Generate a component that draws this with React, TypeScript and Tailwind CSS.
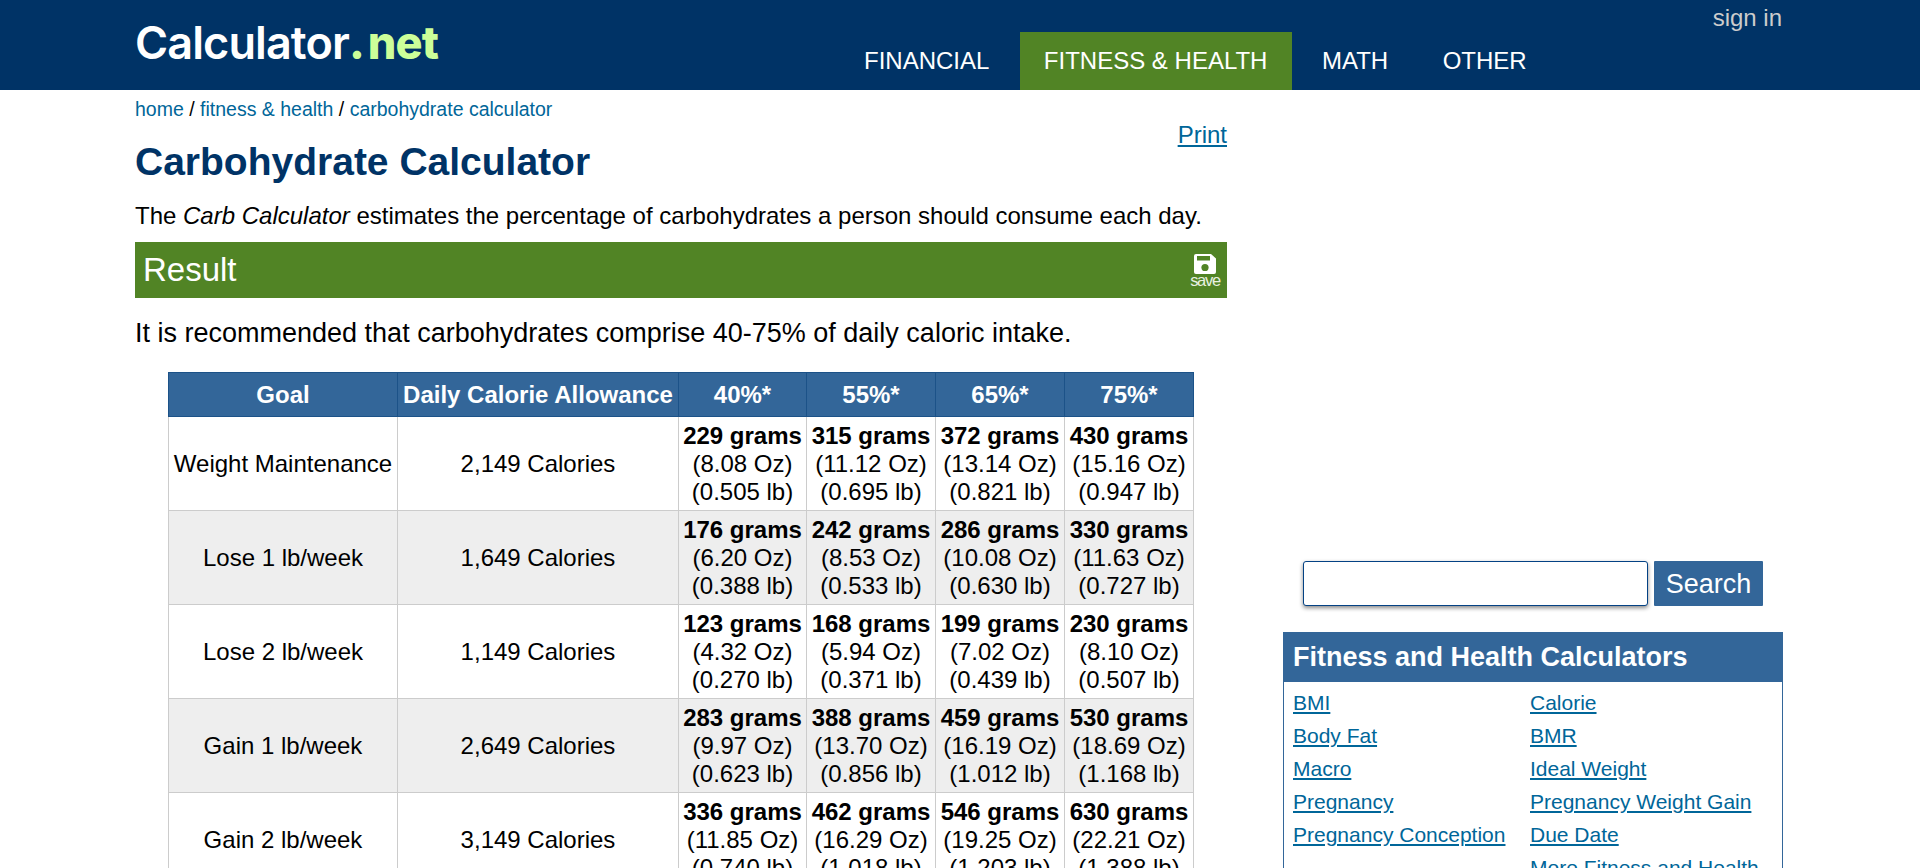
import React from "react";

const rows = [
  {
    goal: "Weight Maintenance",
    calories: "2,149 Calories",
    cells: [
      ["229 grams", "(8.08 Oz)", "(0.505 lb)"],
      ["315 grams", "(11.12 Oz)", "(0.695 lb)"],
      ["372 grams", "(13.14 Oz)", "(0.821 lb)"],
      ["430 grams", "(15.16 Oz)", "(0.947 lb)"],
    ],
  },
  {
    goal: "Lose 1 lb/week",
    calories: "1,649 Calories",
    cells: [
      ["176 grams", "(6.20 Oz)", "(0.388 lb)"],
      ["242 grams", "(8.53 Oz)", "(0.533 lb)"],
      ["286 grams", "(10.08 Oz)", "(0.630 lb)"],
      ["330 grams", "(11.63 Oz)", "(0.727 lb)"],
    ],
  },
  {
    goal: "Lose 2 lb/week",
    calories: "1,149 Calories",
    cells: [
      ["123 grams", "(4.32 Oz)", "(0.270 lb)"],
      ["168 grams", "(5.94 Oz)", "(0.371 lb)"],
      ["199 grams", "(7.02 Oz)", "(0.439 lb)"],
      ["230 grams", "(8.10 Oz)", "(0.507 lb)"],
    ],
  },
  {
    goal: "Gain 1 lb/week",
    calories: "2,649 Calories",
    cells: [
      ["283 grams", "(9.97 Oz)", "(0.623 lb)"],
      ["388 grams", "(13.70 Oz)", "(0.856 lb)"],
      ["459 grams", "(16.19 Oz)", "(1.012 lb)"],
      ["530 grams", "(18.69 Oz)", "(1.168 lb)"],
    ],
  },
  {
    goal: "Gain 2 lb/week",
    calories: "3,149 Calories",
    cells: [
      ["336 grams", "(11.85 Oz)", "(0.740 lb)"],
      ["462 grams", "(16.29 Oz)", "(1.018 lb)"],
      ["546 grams", "(19.25 Oz)", "(1.203 lb)"],
      ["630 grams", "(22.21 Oz)", "(1.388 lb)"],
    ],
  },
];

const headers = [
  { label: "Goal", width: "w-[229px]" },
  { label: "Daily Calorie Allowance", width: "w-[281px]" },
  { label: "40%*", width: "w-[128px]" },
  { label: "55%*", width: "w-[129px]" },
  { label: "65%*", width: "w-[129px]" },
  { label: "75%*", width: "w-[129px]" },
];
const navItems = ["FINANCIAL", "FITNESS & HEALTH", "MATH", "OTHER"];
const links = [
  ["BMI", "Calorie"],
  ["Body Fat", "BMR"],
  ["Macro", "Ideal Weight"],
  ["Pregnancy", "Pregnancy Weight Gain"],
  ["Pregnancy Conception", "Due Date"],
  ["", "More Fitness and Health"],
];

const SaveIcon = () => (
  <svg viewBox="0 0 22 20" className="block w-[22px] h-[20px]">
    <path
      fill="#fff"
      d="M2 0h15l5 4.5V18a2 2 0 0 1-2 2H2a2 2 0 0 1-2-2V2a2 2 0 0 1 2-2z"
    />
    <rect x="3" y="2" width="13" height="4.5" fill="#518425" />
    <circle cx="11" cy="13.5" r="3.6" fill="#518425" />
  </svg>
);

const App: React.FC = () => {
  return (
    <div className="h-[868px] overflow-hidden bg-white text-[24px] leading-[28px] text-black font-['Liberation_Sans',Arial,sans-serif]">
      <div className="h-[90px] bg-[#003366]">
        <div className="relative w-[1650px] h-full mx-auto">
          <a className="absolute left-0 top-[16px] text-[45px] leading-[54px] font-semibold font-['Inter',sans-serif] tracking-[-0.9px] text-white whitespace-nowrap">
            Calculator<span className="font-extrabold text-[#ccff99]">.<span className="ml-[4px]">net</span></span>
          </a>
          <a className="absolute right-[3px] top-[4px] text-[#cccccc]">sign in</a>
          <div className="absolute left-[705px] bottom-0 flex gap-[6.5px]">
            {navItems.map((item) => (
              <a
                key={item}
                className={
                  item === "FITNESS & HEALTH"
                    ? "h-[58px] pl-[24px] pr-[25px] pt-[15px] -mr-[1px] bg-[#518425] text-white"
                    : "h-[58px] px-[24px] pt-[15px] text-white"
                }
              >
                {item}
              </a>
            ))}
          </div>
        </div>
      </div>

      <div className="w-[1650px] mx-auto flex gap-[56px]">
        <div className="w-[1092px] shrink-0">
          <div className="pt-[8px] text-[19.5px] leading-[22px]">
            <a className="text-[#006699]">home</a> / <a className="text-[#006699]">fitness &amp; health</a> /{" "}
            <a className="text-[#006699]">carbohydrate calculator</a>
          </div>
          <a className="float-right mt-[1px] text-[#006699] underline">Print</a>
          <h1 className="pt-[19px] text-[39px] leading-[45px] font-bold text-[#003366]">Carbohydrate Calculator</h1>
          <p className="mt-[18px]">
            The <i>Carb Calculator</i> estimates the percentage of carbohydrates a person should consume each day.
          </p>
          <div className="mt-[12px] h-[56px] bg-[#518425] text-white flex items-center justify-between pl-[8px] pr-[11px]">
            <span className="text-[33px]">Result</span>
            <div className="flex flex-col items-center w-[22px]">
              <SaveIcon />
              <span className="text-[16.5px] leading-[12px] tracking-[-1.3px] text-[#e8f0e0] whitespace-nowrap">save</span>
            </div>
          </div>
          <p className="mt-[19px] text-[27px] leading-[32px]">
            It is recommended that carbohydrates comprise 40-75% of daily caloric intake.
          </p>
          <table className="mt-[23px] mx-auto border-collapse text-center">
            <thead>
              <tr>
                {headers.map((h) => (
                  <th
                    key={h.label}
                    className={`${h.width} bg-[#336699] text-white font-bold border border-[#1c5288] py-[7.5px] px-[4px] whitespace-nowrap`}
                  >
                    {h.label}
                  </th>
                ))}
              </tr>
            </thead>
            <tbody>
              {rows.map((r, i) => (
                <tr key={r.goal} className={i % 2 === 1 ? "bg-[#eeeeee]" : "bg-white"}>
                  <td className="border border-[#cccccc] px-[4px] py-[4.5px] whitespace-nowrap">{r.goal}</td>
                  <td className="border border-[#cccccc] px-[4px] py-[4.5px] whitespace-nowrap">{r.calories}</td>
                  {r.cells.map((c) => (
                    <td key={c[0]} className="border border-[#cccccc] px-[4px] py-[4.5px] whitespace-nowrap">
                      <b>{c[0]}</b>
                      <br />
                      {c[1]}
                      <br />
                      {c[2]}
                    </td>
                  ))}
                </tr>
              ))}
            </tbody>
          </table>
        </div>

        <div className="w-[500px] shrink-0 pt-[471px]">
          <div className="flex justify-center gap-[6px]">
            <input
              type="text"
              className="w-[345px] h-[45px] bg-white border border-[#044284] rounded-[3px] shadow-[0_2px_4px_#888888]"
            />
            <button className="w-[109px] h-[45px] pt-[1px] bg-[#336699] text-white text-[27px] rounded-[1px]">Search</button>
          </div>
          <div className="mt-[26px] border border-[#336699]">
            <div className="h-[49px] pb-[2px] bg-[#336699] text-white text-[27px] font-bold pl-[9px] flex items-center">
              Fitness and Health Calculators
            </div>
            <div className="px-[9px] pt-[4px] pb-[10px] grid grid-cols-[237px_1fr] text-[21px] leading-[33px] text-[#006699]">
              {links.map((pair) => (
                <React.Fragment key={pair[1]}>
                  <div>{pair[0] && <a className="underline">{pair[0]}</a>}</div>
                  <div>
                    <a className="underline">{pair[1]}</a>
                  </div>
                </React.Fragment>
              ))}
            </div>
          </div>
        </div>
      </div>
    </div>
  );
};

export default App;
